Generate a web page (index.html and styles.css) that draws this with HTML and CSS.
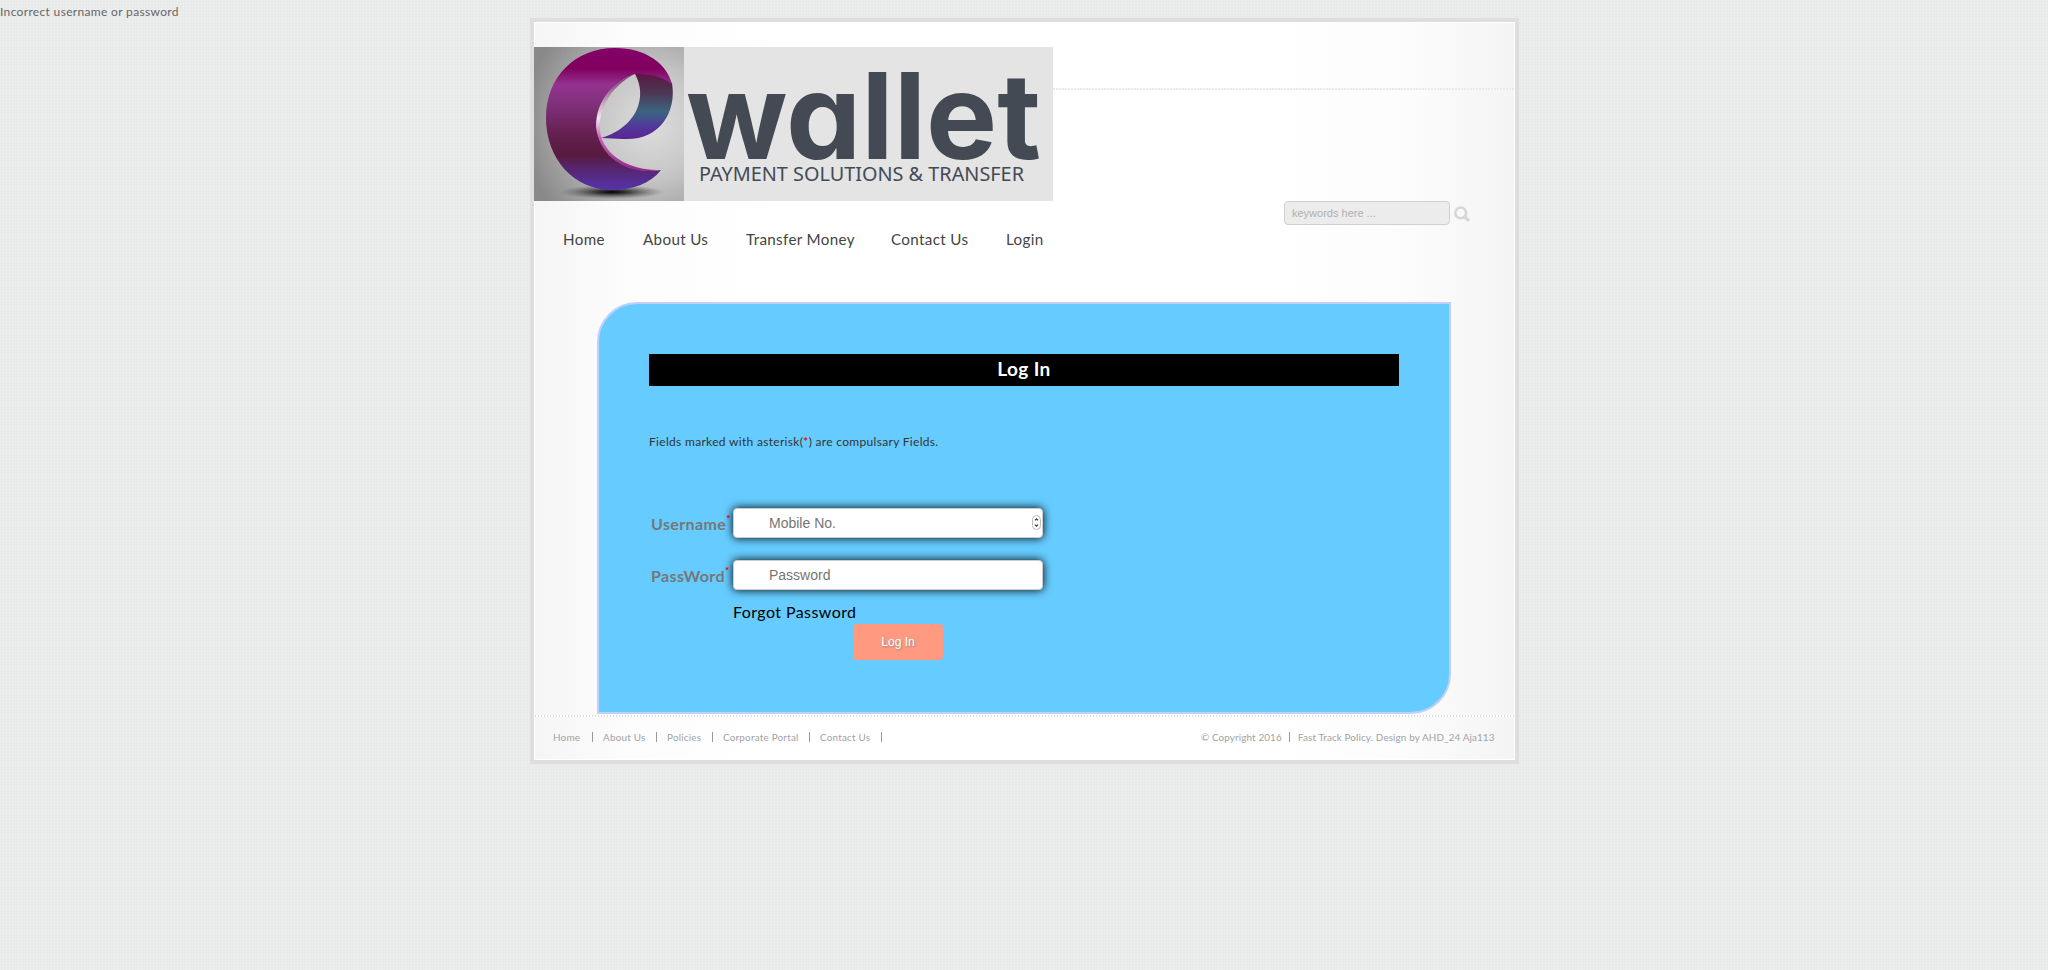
FILE: index.html
```html
<!DOCTYPE html>
<html lang="en">
<head>
<meta charset="utf-8">
<title>eWallet</title>
<link rel="stylesheet" href="styles.css">
</head>
<body>
<p class="alert">Incorrect username or password</p>
<div class="shell">
  <header class="header">
    <svg class="logo" width="519" height="154" viewBox="0 0 519 154" role="img">
      <defs>
        <radialGradient id="tile" cx=".78" cy=".5" r=".85"><stop offset="0" stop-color="#dedede"/><stop offset=".4" stop-color="#c7c7c7"/><stop offset="1" stop-color="#898989"/></radialGradient>
        <linearGradient id="body" gradientUnits="userSpaceOnUse" x1="0" y1="0" x2="0" y2="144"><stop offset="0" stop-color="#85006a"/><stop offset=".15" stop-color="#80005f"/><stop offset=".26" stop-color="#94328f"/><stop offset=".4" stop-color="#80307b"/><stop offset=".6" stop-color="#652052"/><stop offset=".75" stop-color="#571a3e"/><stop offset=".87" stop-color="#56287a"/><stop offset="1" stop-color="#5533ac"/></linearGradient>
        <linearGradient id="band" x1="0" y1="0" x2="0" y2="1"><stop offset="0" stop-color="#5b1743"/><stop offset=".28" stop-color="#4d3553"/><stop offset=".58" stop-color="#3c6580"/><stop offset=".8" stop-color="#50389b"/><stop offset="1" stop-color="#5a2491"/></linearGradient>
        <linearGradient id="rim" x1="0" y1="0" x2="0" y2="1"><stop offset="0" stop-color="#77316c"/><stop offset=".45" stop-color="#f1e5ef"/><stop offset=".65" stop-color="#c766b5"/><stop offset="1" stop-color="#8f2788"/></linearGradient>
        <radialGradient id="shade"><stop offset="0" stop-color="#000"/><stop offset=".3" stop-color="#222" stop-opacity=".85"/><stop offset="1" stop-color="#555" stop-opacity="0"/></radialGradient>
      </defs>
      <rect width="519" height="154" fill="#e4e4e4"/>
      <rect width="150" height="154" fill="url(#tile)"/>
      <ellipse cx="78" cy="145" rx="52" ry="7" fill="url(#shade)"/>
      <path d="M101 27C118 26 130 29 138 36C143 66 125 94 89 92L67 91C85 86 104 72 106 50C107 40 104 33 101 27Z" fill="url(#band)"/>
      <path d="M127 123C116 137 98 143 78 143C40 143 12 112 12 71C12 30 41 1 81 1C112 1 133 17 138 37C127 29 115 27 101 27C80 34 64 54 63 80C65 105 92 129 127 123Z" fill="url(#body)"/>
      <path d="M99 28C78 36 62 54 62 80C65 108 91 129 126 123C97 124 69 109 66 84C64 59 80 38 99 28Z" fill="url(#rim)"/>
      <text class="logo-word" x="152" y="112" textLength="355" lengthAdjust="spacingAndGlyphs">wallet</text>
      <text class="logo-tag" x="165" y="134" textLength="325" lengthAdjust="spacingAndGlyphs">PAYMENT SOLUTIONS &amp; TRANSFER</text>
    </svg>
    <div class="header-side">
      <div class="rule"></div>
      <form class="search">
        <input class="search-input" type="text" placeholder="keywords here ...">
        <svg class="search-icon" width="17" height="17" viewBox="0 0 17 17" fill="none" stroke="#d6d6d6"><circle cx="6.7" cy="6.9" r="5.4" stroke-width="2.5"/><path d="M11 11l4 4" stroke-width="3.2"/></svg>
      </form>
    </div>
  </header>
  <nav class="nav">
    <a class="n-home">Home</a><a class="n-about">About Us</a><a class="n-transfer">Transfer Money</a><a class="n-contact">Contact Us</a><a>Login</a>
  </nav>
  <main class="panel">
    <h1 class="title">Log In</h1>
    <p class="note">Fields marked with asterisk(<b class="star">*</b>) are compulsary Fields.</p>
    <div class="row"><label class="label">Username<sup class="req">*</sup></label>
      <div class="field"><input class="input" type="text" placeholder="Mobile No.">
        <svg class="spinner" width="9" height="15" viewBox="0 0 9 15" fill="none"><rect x=".5" y=".5" width="8" height="14" rx="4" fill="#fff" stroke="#bbb"/><path d="M3 5.3L4.5 3.8L6 5.3M3 9.7L4.5 11.2L6 9.7" stroke="#333" stroke-width="1.2"/></svg>
      </div></div>
    <div class="row row-last"><label class="label">PassWord<sup class="req">*</sup></label>
      <div class="field"><input class="input" type="password" placeholder="Password"></div></div>
    <a class="forgot">Forgot Password</a>
    <button class="submit" type="button">Log In</button>
  </main>
  <footer class="footer">
    <div class="links"><a class="f-home">Home</a><a class="f-about">About Us</a><a class="f-policies">Policies</a><a class="f-portal">Corporate Portal</a><a class="f-contact">Contact Us</a></div>
    <p class="legal"><span class="copy">© Copyright 2016</span><span class="design">Fast Track Policy. Design by AHD_24 Aja113</span></p>
  </footer>
</div>
</body>
</html>
```
FILE: styles.css
```css
* { box-sizing: border-box; margin: 0; padding: 0; }
body {
  height: 970px;
  overflow: hidden;
  font-family: Lato, sans-serif;
  color: #666;
  background-color: #e8e9e9;
  background-image:
    repeating-linear-gradient(0deg, rgba(255,255,255,.14) 0 1px, transparent 1px 3px),
    repeating-linear-gradient(90deg, rgba(255,255,255,.14) 0 1px, transparent 1px 3px);
}
.alert { height: 18px; font-size: 12px; line-height: 24px; letter-spacing: .33px; white-space: nowrap; }
.shell {
  width: 989px;
  height: 746px;
  margin-left: 530px;
  border: 4px solid #dedede;
  background: linear-gradient(90deg, #f5f5f5, #fcfcfc 9%, #fff 24%, #fff 74%, #fcfcfc 89%, #f4f4f4);
  box-shadow: inset 0 0 0 1px #fff;
}
.header { display: flex; padding-top: 25px; height: 203px; }
.logo { display: block; flex: none; overflow: visible; }
.logo-word { font: 700 119px Inter, sans-serif; font-feature-settings: "cv11"; fill: #434a54; }
.logo-tag { font: 20px "Noto Sans", sans-serif; fill: #434a54; }
.header-side { flex: 1; padding-top: 41px; }
.rule { height: 2px; background: repeating-linear-gradient(90deg, #eaeaea 0 2px, #f8f8f8 2px 3px); }
.search { display: flex; gap: 4px; margin: 111px 0 0 231px; align-items: center; }
.search-input {
  width: 166px; height: 24px; padding: 0 7px;
  border: 1px solid #d0d0d0; border-radius: 4px; background: #ececec;
  font: 11px "Liberation Sans", sans-serif;
}
.search-input::placeholder { color: #b0b0b0; }
.search-icon { margin-top: 2px; }
.nav { display: flex; height: 77px; padding: 4px 0 0 29px; color: #444; font-size: 15.2px; line-height: 20px; letter-spacing: .34px; white-space: nowrap; }
.n-home { width: 80px; }
.n-about { width: 103px; }
.n-transfer { width: 145px; }
.n-contact { width: 115px; }
.panel {
  width: 854px; height: 412px; margin-left: 63px; padding: 50px;
  border: 2px solid #bfd0fb; border-radius: 40px 0 40px 0; background: #6cf;
}
.title { height: 32px; background: #000; color: #fff; font: 700 19px/30px Lato, sans-serif; text-align: center; letter-spacing: .4px; }
.note { height: 122px; padding-top: 46px; color: #333; font-size: 12px; line-height: 20px; letter-spacing: .31px; }
.star { color: red; }
.row { display: flex; height: 52px; }
.row-last { height: 42px; }
.label { width: 84px; padding-left: 2px; color: #777; font-size: 16px; font-weight: 700; line-height: 32px; white-space: nowrap; letter-spacing: .38px; }
.req { color: red; font-size: 10px; line-height: 0; vertical-align: 8px; }
.field { position: relative; width: 310px; height: 30px; }
.input {
  display: block; width: 310px; height: 30px; padding: 0 36px 0 35px;
  border: 1px solid #ccc; border-radius: 4px; background: #fff;
  box-shadow: 0 0 10px #000;
  font: 14px "Liberation Sans", sans-serif;
}
.input::placeholder { color: #757575; }
.spinner { position: absolute; right: 2px; top: 7px; }
.forgot { display: block; height: 22px; margin-left: 84px; color: #000; font-size: 16px; line-height: 20px; letter-spacing: .42px; }
.submit {
  display: block; width: 90px; height: 36px; margin-left: 204px;
  border: 0; border-radius: 4px; background: #ff9980; color: #fff;
  font: 12px "Liberation Sans", sans-serif; text-shadow: 1px 1px 2px #888;
}
.footer {
  display: flex; justify-content: space-between; height: 46px; margin: 0 1px; padding: 18px 19px 0 18px;
  background: repeating-linear-gradient(90deg, #dcdcdc 0 1px, #fff 1px 3px) 0 1px / 100% 2px no-repeat;
  color: #a2a2a2; font-size: 9.9px; line-height: 14px; white-space: nowrap; letter-spacing: .22px;
}
.links { display: flex; gap: 10px; height: 14px; }
.links a { height: 10px; line-height: 11px; border-right: 1px solid #999; }
.f-home { width: 40px; }
.f-about { width: 54px; }
.f-policies { width: 46px; }
.f-portal { width: 87px; }
.f-contact { width: 62px; }
.legal { display: flex; gap: 8px; height: 10px; line-height: 11px; letter-spacing: .12px; }
.copy { width: 89px; border-right: 1px solid #999; }
.design { width: 197px; }
```
